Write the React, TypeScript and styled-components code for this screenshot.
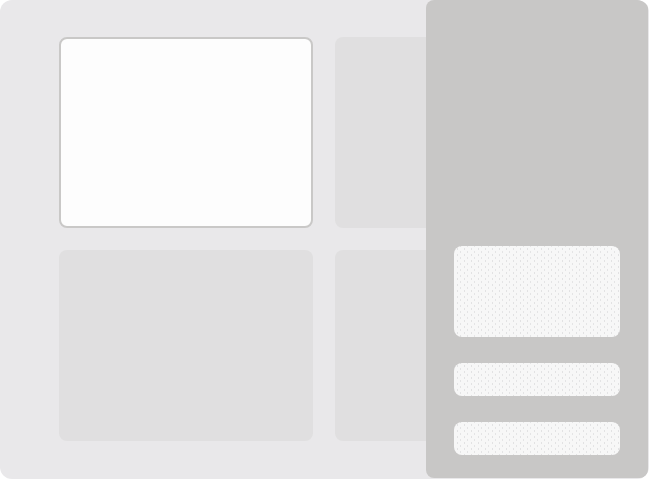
import React from "react";
import styled, { createGlobalStyle } from "styled-components";

const GlobalStyle = createGlobalStyle`
  html, body {
    margin: 0;
    padding: 0;
    background: #ffffff;
    font-family: "Liberation Sans", Arial, sans-serif;
  }
`;

const App: React.FC = () => {
  const tiles = [true, false, false, false];

  return (
    <>
      <GlobalStyle />
      <Screen>
        <TileGrid>
          {tiles.map((selected, i) => (
            <Tile key={i} selected={selected} />
          ))}
        </TileGrid>
        <Drawer>
          <DrawerBlock height={91} />
          <DrawerBlock height={33} />
          <DrawerBlock height={33} />
        </Drawer>
      </Screen>
    </>
  );
};

const Screen = styled.div`
  position: relative;
  width: 649px;
  height: 479px;
  background: #e9e8ea;
  border-radius: 12px;
  overflow: hidden;
`;

const TileGrid = styled.div`
  display: grid;
  grid-template-columns: 254px 254px;
  grid-template-rows: 191px 191px;
  gap: 22px;
  padding: 37px 0 0 59px;
`;

const Tile = styled.div<{ selected?: boolean }>`
  box-sizing: border-box;
  border-radius: 8px;
  background: ${(p) => (p.selected ? "#fdfdfd" : "#e0dfe0")};
  border: ${(p) => (p.selected ? "2px solid #c9c8c7" : "none")};
`;

const Drawer = styled.div`
  position: absolute;
  top: 0;
  right: 1px;
  box-sizing: border-box;
  width: 222px;
  height: 478px;
  background: #c8c7c6;
  border-radius: 8px;
  display: flex;
  flex-direction: column;
  justify-content: flex-end;
  gap: 26px;
  padding: 0 28px 23px;
`;

const DrawerBlock = styled.div<{ height: number }>`
  height: ${(p) => p.height}px;
  border-radius: 8px;
  background-color: #f7f7f7;
  background-image:
    radial-gradient(circle, #e2e2e3 0.6px, transparent 0.9px),
    radial-gradient(circle, #e4e4e5 0.6px, transparent 0.9px);
  background-size: 7px 6px, 7px 6px;
  background-position: 0 0, 3px 3px;
`;

export default App;
